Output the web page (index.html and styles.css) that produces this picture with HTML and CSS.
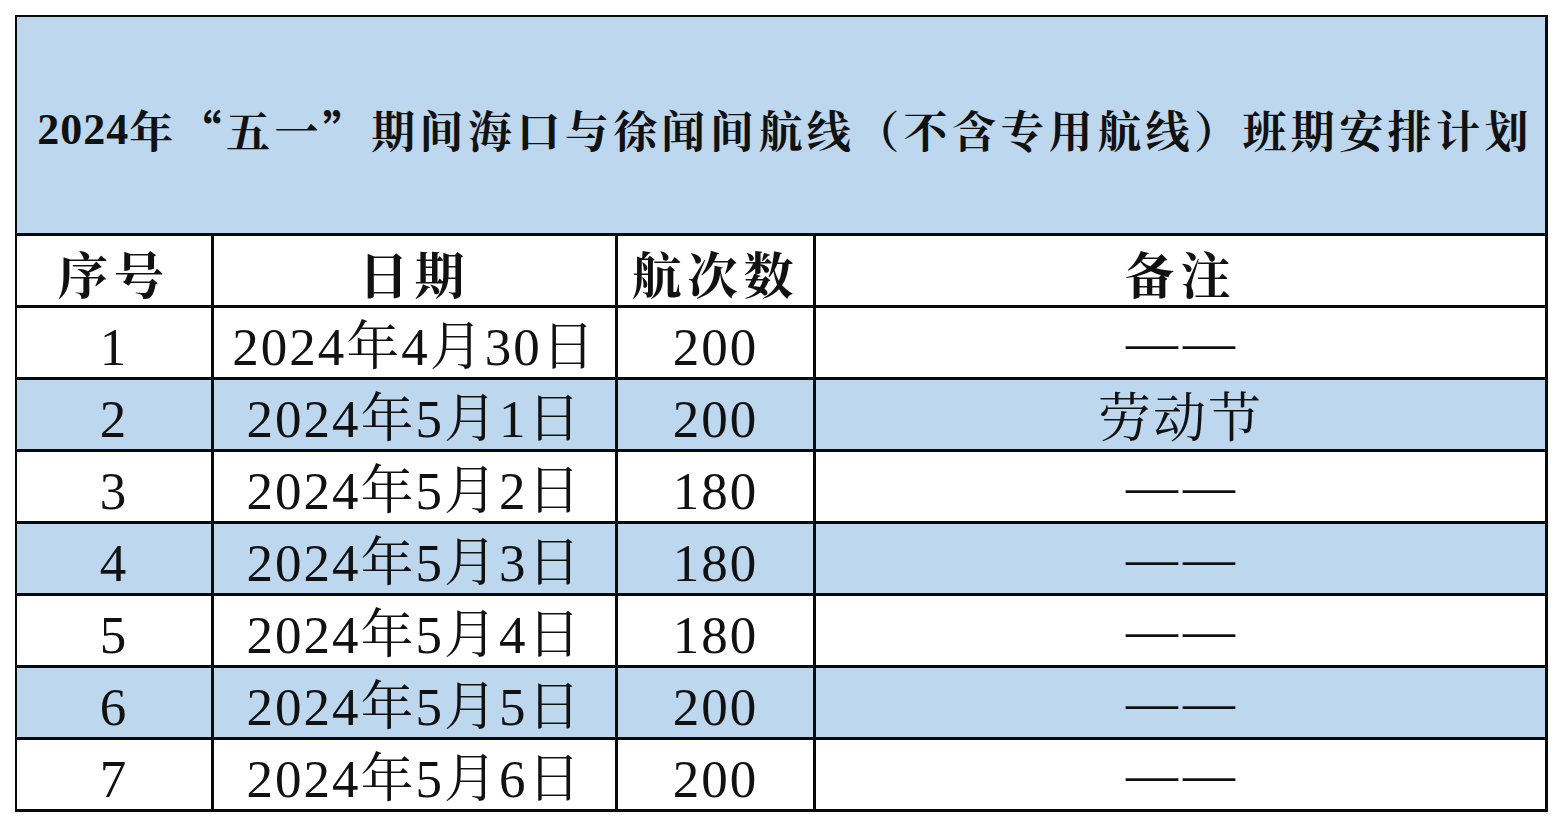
FILE: index.html
```html
<!DOCTYPE html>
<html lang="zh-CN">
<head>
<meta charset="utf-8">
<title>2024年“五一”期间海口与徐闻间航线班期安排计划</title>
<link rel="stylesheet" href="styles.css">
</head>
<body>
<div class="sheet">
  <div class="title"><span class="num">2024</span>年<span class="q">“</span>五一<span class="q">”</span>期间海口与徐闻间航线（不含专用航线）班期安排计划</div>

  <div class="cell head">序号</div>
  <div class="cell head">日期</div>
  <div class="cell head">航次数</div>
  <div class="cell head">备注</div>

  <div class="cell">1</div><div class="cell">2024年4月30日</div><div class="cell">200</div><div class="cell dash">——</div>
  <div class="cell blue">2</div><div class="cell blue">2024年5月1日</div><div class="cell blue">200</div><div class="cell blue">劳动节</div>
  <div class="cell">3</div><div class="cell">2024年5月2日</div><div class="cell">180</div><div class="cell dash">——</div>
  <div class="cell blue">4</div><div class="cell blue">2024年5月3日</div><div class="cell blue">180</div><div class="cell blue dash">——</div>
  <div class="cell">5</div><div class="cell">2024年5月4日</div><div class="cell">180</div><div class="cell dash">——</div>
  <div class="cell blue">6</div><div class="cell blue">2024年5月5日</div><div class="cell blue">200</div><div class="cell blue dash">——</div>
  <div class="cell">7</div><div class="cell">2024年5月6日</div><div class="cell">200</div><div class="cell dash">——</div>
</div>
</body>
</html>
```
FILE: styles.css
```css
html, body {
  margin: 0;
  padding: 0;
  background: #ffffff;
}

body {
  padding: 15px 0 0 15px;
  font-family: "Liberation Serif", "Noto Serif CJK SC", "Noto Sans CJK SC", serif;
  color: #111111;
}

.sheet {
  width: 1533px;
  box-sizing: border-box;
  background: #0a0a0a;
  padding: 2px 3px 3px 2px;
  display: grid;
  grid-template-columns: 194px 401px 195px 729px;
  grid-template-rows: 216px repeat(8, 69px);
  gap: 3px;
}

.title {
  grid-column: 1 / -1;
  background: #bdd7ee;
  display: flex;
  align-items: center;
  justify-content: center;
  padding-top: 8px;
  padding-left: 8px;
  box-sizing: border-box;
  font-size: 44px;
  font-weight: 700;
  letter-spacing: 4.4px;
  white-space: nowrap;
}

.title .num {
  letter-spacing: 1px;
}

.title .q {
  font-family: "Noto Sans CJK SC", sans-serif;
}

.cell {
  background: #ffffff;
  display: flex;
  align-items: center;
  justify-content: center;
  padding-top: 10px;
  box-sizing: border-box;
  font-size: 53px;
  letter-spacing: 2px;
  white-space: nowrap;
  line-height: 1;
}

.cell.blue {
  background: #bdd7ee;
}

.cell.head {
  font-size: 50px;
  font-weight: 700;
  letter-spacing: 6px;
  padding-top: 12px;
}

.cell.dash {
  font-size: 52px;
  letter-spacing: 5px;
  padding-top: 0;
  padding-left: 5px;
}
```
